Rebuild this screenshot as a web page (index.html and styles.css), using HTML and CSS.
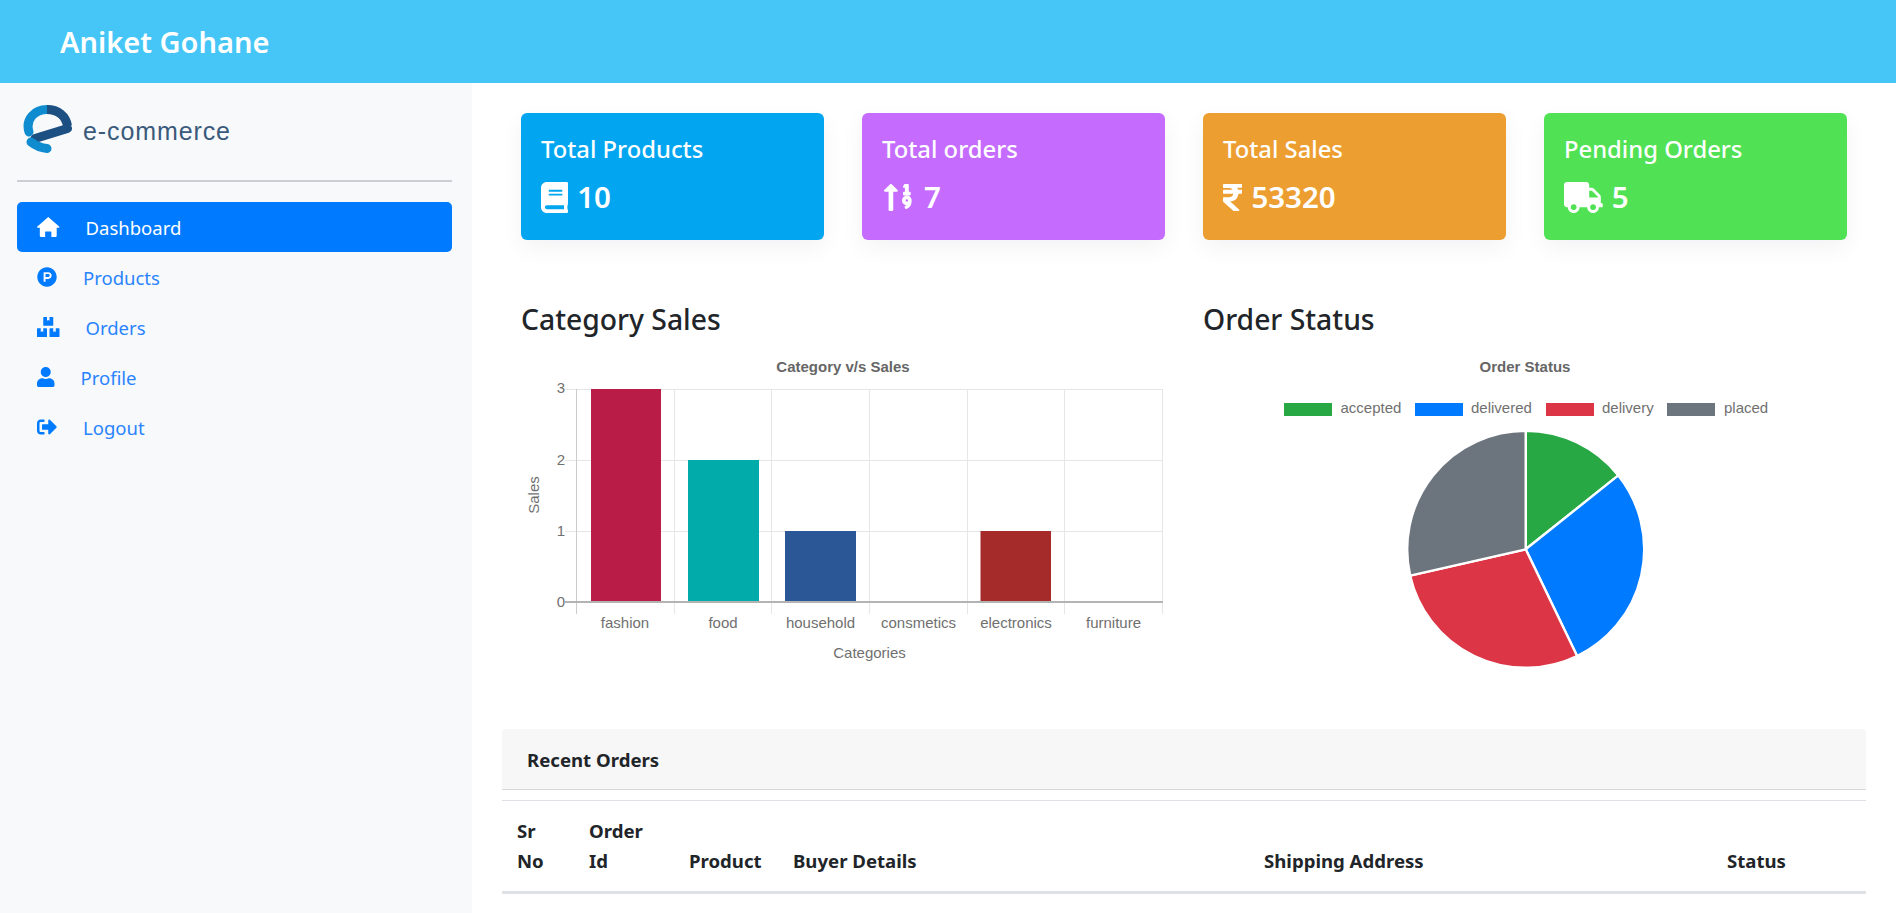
FILE: index.html
```html
<!DOCTYPE html>
<html lang="en">
<head>
    <meta charset="UTF-8">
    <meta name="viewport" content="width=device-width, initial-scale=1.0">
    <title>Admin Dashboard</title>
    <link rel="stylesheet" href="styles.css">
</head>
<body>
    <header class="topbar">
        <h1 class="brand-name">Aniket Gohane</h1>
    </header>

    <div class="layout">
        <aside class="sidebar">
            <div class="logo">
                <svg class="logo-mark" viewBox="0 0 50 50">
                    <path class="logo-blue" d="M7 27C3 14 13 4.500 25 4.500"/>
                    <path class="logo-dark" d="M25 4.500C36 4.500 44 11 45.500 21"/>
                    <path class="logo-bar" d="M45.500 23.500L13 33.500"/>
                    <path class="logo-tail" d="M9 37C14 41 20 43 25 43.500"/>
                </svg>
                <span class="logo-text">e-commerce</span>
            </div>
            <hr class="divider">
            <nav class="nav">
                <a class="nav-link active" href="#">
                    <svg class="nav-icon" viewBox="0 0 576 512"><path d="M288 0L566 240a20 20 0 0 1-14 36H504V480a32 32 0 0 1-32 32H368V384a16 16 0 0 0-16-16H224a16 16 0 0 0-16 16V512H104a32 32 0 0 1-32-32V276H24a20 20 0 0 1-14-36Z"/></svg>
                    Dashboard
                </a>
                <a class="nav-link" href="#">
                    <svg class="nav-icon" viewBox="0 0 512 512"><path d="M326.300 218.800c0 20.500-16.700 37.200-37.200 37.200h-70.300v-74.400h70.300c20.500 0 37.200 16.700 37.200 37.200zM504 256c0 137-111 248-248 248S8 393 8 256 119 8 256 8s248 111 248 248zm-128.100-37.200c0-47.900-38.900-86.800-86.800-86.800H169.200v248h49.600v-74.400h70.300c47.900 0 86.800-38.900 86.800-86.800z"/></svg>
                    Products
                </a>
                <a class="nav-link" href="#">
                    <svg class="nav-icon" viewBox="0 0 576 512"><path d="M560 288h-80v96l-32-21.300-32 21.300v-96h-80c-8.800 0-16 7.200-16 16v192c0 8.800 7.200 16 16 16h224c8.800 0 16-7.200 16-16V304c0-8.800-7.200-16-16-16zm-384-64h224c8.800 0 16-7.200 16-16V16c0-8.800-7.200-16-16-16h-80v96l-32-21.300L256 96V0h-80c-8.800 0-16 7.200-16 16v192c0 8.800 7.200 16 16 16zm64 64h-80v96l-32-21.300L96 384v-96H16c-8.800 0-16 7.200-16 16v192c0 8.800 7.200 16 16 16h224c8.800 0 16-7.200 16-16V304c0-8.800-7.200-16-16-16z"/></svg>
                    Orders
                </a>
                <a class="nav-link" href="#">
                    <svg class="nav-icon" viewBox="0 0 448 512"><path d="M224 256c70.700 0 128-57.300 128-128S294.700 0 224 0 96 57.300 96 128s57.300 128 128 128zm89.600 32h-16.700c-22.200 10.200-46.900 16-72.900 16s-50.600-5.800-72.900-16h-16.700C60.200 288 0 348.200 0 422.400V464c0 26.500 21.500 48 48 48h352c26.500 0 48-21.500 48-48v-41.600c0-74.200-60.200-134.400-134.400-134.400z"/></svg>
                    Profile
                </a>
                <a class="nav-link" href="#">
                    <svg class="nav-icon" viewBox="0 0 512 512"><path d="M497 273L329 441c-15 15-41 4.500-41-17v-96H152c-13.300 0-24-10.700-24-24v-96c0-13.300 10.700-24 24-24h136V88c0-21.400 25.900-32 41-17l168 168c9.300 9.400 9.300 24.600 0 34zM192 436v-40c0-6.600-5.400-12-12-12H96c-17.700 0-32-14.300-32-32V160c0-17.700 14.300-32 32-32h84c6.600 0 12-5.400 12-12V76c0-6.600-5.400-12-12-12H96c-53 0-96 43-96 96v192c0 53 43 96 96 96h84c6.600 0 12-5.400 12-12z"/></svg>
                    Logout
                </a>
            </nav>
        </aside>

        <main class="content">
            <section class="stats">
                <div class="stat-card stat-blue">
                    <h3 class="stat-title">Total Products</h3>
                    <p class="stat-value">
                        <svg class="stat-icon" viewBox="0 0 448 512"><path d="M448 360V24c0-13.300-10.700-24-24-24H96C43 0 0 43 0 96v320c0 53 43 96 96 96h328c13.300 0 24-10.700 24-24v-16c0-7.500-3.500-14.300-8.900-18.700-4.200-15.400-4.200-59.300 0-74.700 5.400-4.300 8.900-11.100 8.900-18.600zM128 134c0-3.300 2.700-6 6-6h212c3.300 0 6 2.700 6 6v20c0 3.300-2.700 6-6 6H134c-3.300 0-6-2.700-6-6v-20zm0 64c0-3.300 2.700-6 6-6h212c3.300 0 6 2.700 6 6v20c0 3.300-2.700 6-6 6H134c-3.300 0-6-2.700-6-6v-20zm253.400 250H96c-17.700 0-32-14.300-32-32 0-17.600 14.400-32 32-32h285.400c-1.900 17.100-1.900 46.900 0 64z"/></svg>
                        10
                    </p>
                </div>
                <div class="stat-card stat-purple">
                    <h3 class="stat-title">Total orders</h3>
                    <p class="stat-value">
                        <svg class="stat-icon" viewBox="-32 0 544 512">
                            <path transform="scale(1.2 1)" d="M107.310 36.690a16 16 0 0 0-22.620 0l-80 96C-5.350 142.740 1.780 160 16 160h48v304a16 16 0 0 0 16 16h32a16 16 0 0 0 16-16V160h48c14.210 0 21.380-17.240 11.310-27.310z"/>
                            <path transform="translate(26 -256)" d="M400 416h-16V304a16 16 0 0 0-16-16h-48a16 16 0 0 0-14.290 8.830l-16 32A16 16 0 0 0 304 352h16v64h-16a16 16 0 0 0-16 16v32a16 16 0 0 0 16 16h96a16 16 0 0 0 16-16v-32a16 16 0 0 0-16-16z"/>
                            <path transform="translate(26 256)" d="M330.170 -29.090a79 79 0 0 0-55 54.170c-14.270 51.050 21.190 97.770 68.830 102.530a84.070 84.070 0 0 1-20.850 12.910c-7.570 3.400-10.800 12.470-8.180 20.340l9.900 20c2.870 8.630 12.530 13.490 20.900 9.910 58-24.770 86.250-61.610 86.250-132V48c-.02-51.210-48.400-91.340-101.850-77.090zM352 68a20 20 0 1 1 20-20 20 20 0 0 1-20 20z"/>
                        </svg>
                        7
                    </p>
                </div>
                <div class="stat-card stat-orange">
                    <h3 class="stat-title">Total Sales</h3>
                    <p class="stat-value">
                        <svg class="stat-icon" viewBox="0 0 320 512"><path d="M308 96c6.627 0 12-5.373 12-12V44c0-6.627-5.373-12-12-12H12C5.373 32 0 37.373 0 44v44.748c0 6.627 5.373 12 12 12h85.280c27.308 0 48.261 9.958 60.970 27.252H12c-6.627 0-12 5.373-12 12v40c0 6.627 5.373 12 12 12h158.757c-6.217 36.086-32.961 58.632-74.757 58.632H12c-6.627 0-12 5.373-12 12v53.012c0 3.349 1.400 6.546 3.861 8.818l165.052 152.356a12.001 12.001 0 0 0 8.139 3.182h82.562c10.924 0 16.166-13.408 8.139-20.818L116.871 319.906c76.499-2.340 131.144-53.395 138.318-127.906H308c6.627 0 12-5.373 12-12v-40c0-6.627-5.373-12-12-12h-58.690c-3.486-11.541-8.280-22.246-14.252-32H308z"/></svg>
                        53320
                    </p>
                </div>
                <div class="stat-card stat-green">
                    <h3 class="stat-title">Pending Orders</h3>
                    <p class="stat-value">
                        <svg class="stat-icon" viewBox="0 0 640 512"><path d="M624 352h-16V243.900c0-12.700-5.100-24.900-14.100-33.900L494 110.100c-9-9-21.200-14.100-33.900-14.100H416V48c0-26.500-21.500-48-48-48H48C21.500 0 0 21.500 0 48v320c0 26.500 21.500 48 48 48h16c0 53 43 96 96 96s96-43 96-96h128c0 53 43 96 96 96s96-43 96-96h48c8.800 0 16-7.200 16-16v-32c0-8.800-7.200-16-16-16zM160 464c-26.500 0-48-21.500-48-48s21.500-48 48-48 48 21.500 48 48-21.500 48-48 48zm320 0c-26.500 0-48-21.500-48-48s21.500-48 48-48 48 21.500 48 48-21.500 48-48 48zm80-208H416V144h44.100l99.900 99.900V256z"/></svg>
                        5
                    </p>
                </div>
            </section>

            <section class="charts">
                <div class="chart-box">
                    <h2 class="chart-heading">Category Sales</h2>
                    <svg class="chart" width="660" height="330" viewBox="0 0 660 330">
                        <text class="chart-title" x="322" y="22" text-anchor="middle">Category v/s Sales</text>
                        <g class="grid">
                            <line x1="44" y1="39.500" x2="642" y2="39.500"/>
                            <line x1="44" y1="110.500" x2="642" y2="110.500"/>
                            <line x1="44" y1="181.500" x2="642" y2="181.500"/>
                            <line x1="153.500" y1="39" x2="153.500" y2="264"/>
                            <line x1="250.500" y1="39" x2="250.500" y2="264"/>
                            <line x1="348.500" y1="39" x2="348.500" y2="264"/>
                            <line x1="446.500" y1="39" x2="446.500" y2="264"/>
                            <line x1="543.500" y1="39" x2="543.500" y2="264"/>
                            <line x1="641.500" y1="39" x2="641.500" y2="264"/>
                        </g>
                        <rect class="bar-fashion" x="70" y="39" width="70" height="213"/>
                        <rect class="bar-food" x="167" y="110" width="71" height="142"/>
                        <rect class="bar-household" x="264" y="181" width="71" height="71"/>
                        <rect class="bar-electronics" x="459.500" y="181" width="70.500" height="71"/>
                        <line class="axis-y" x1="55.500" y1="39" x2="55.500" y2="264"/>
                        <line class="axis-x" x1="44" y1="252" x2="642" y2="252"/>
                        <g class="tick" text-anchor="end">
                            <text x="44" y="43">3</text>
                            <text x="44" y="115">2</text>
                            <text x="44" y="186">1</text>
                            <text x="44" y="257">0</text>
                        </g>
                        <g class="tick" text-anchor="middle">
                            <text x="104" y="278">fashion</text>
                            <text x="202" y="278">food</text>
                            <text x="299.500" y="278">household</text>
                            <text x="397.500" y="278">consmetics</text>
                            <text x="495" y="278">electronics</text>
                            <text x="592.500" y="278">furniture</text>
                            <text x="348.500" y="308">Categories</text>
                            <text transform="translate(18 145) rotate(-90)">Sales</text>
                        </g>
                    </svg>
                </div>
                <div class="chart-box">
                    <h2 class="chart-heading">Order Status</h2>
                    <svg class="chart" width="640" height="330" viewBox="0 0 640 330">
                        <text class="chart-title" x="322" y="22" text-anchor="middle">Order Status</text>
                        <rect class="slice-accepted" x="81" y="53" width="48" height="13"/>
                        <rect class="slice-delivered" x="212" y="53" width="48" height="13"/>
                        <rect class="slice-delivery" x="343" y="53" width="48" height="13"/>
                        <rect class="slice-placed" x="464" y="53" width="48" height="13"/>
                        <g class="tick">
                            <text x="137.500" y="63">accepted</text>
                            <text x="268" y="63">delivered</text>
                            <text x="399" y="63">delivery</text>
                            <text x="521" y="63">placed</text>
                        </g>
                        <g class="pie">
                            <path class="slice-accepted" d="M322.700 199.300L322.700 80.800A118.500 118.500 0 0 1 415.340 125.420Z"/>
                            <path class="slice-delivered" d="M322.700 199.300L415.340 125.420A118.500 118.500 0 0 1 374.120 306.070Z"/>
                            <path class="slice-delivery" d="M322.700 199.300L374.120 306.070A118.500 118.500 0 0 1 207.170 225.670Z"/>
                            <path class="slice-placed" d="M322.700 199.300L207.170 225.670A118.500 118.500 0 0 1 322.700 80.800Z"/>
                        </g>
                    </svg>
                </div>
            </section>

            <section class="orders">
                <div class="orders-header">Recent Orders</div>
                <table class="orders-table">
                    <thead>
                        <tr>
                            <th class="col-sr">Sr No</th>
                            <th class="col-id">Order Id</th>
                            <th class="col-product">Product</th>
                            <th class="col-buyer">Buyer Details</th>
                            <th class="col-address">Shipping Address</th>
                            <th>Status</th>
                        </tr>
                    </thead>
                </table>
            </section>
        </main>
    </div>
</body>
</html>
```

FILE: styles.css
```css
* {
    box-sizing: border-box;
}

html,
body {
    height: 100%;
}

body {
    margin: 0;
    overflow: hidden;
    font-family: "Noto Sans", "Open Sans", Arial, sans-serif;
    color: #212529;
    background: #fff;
}

.topbar {
    height: 83px;
    padding-left: 60px;
    display: flex;
    align-items: center;
    background: #45c6f7;
}

.brand-name {
    margin: 0;
    font-size: 29px;
    font-weight: 600;
    color: #fff;
}

.layout {
    display: grid;
    grid-template-columns: 472px 1fr;
    height: calc(100vh - 83px);
}

.sidebar {
    padding: 22px 20px 0 17px;
    background: #f8f9fa;
}

.logo {
    height: 50px;
    padding-left: 5px;
    display: flex;
    align-items: center;
    gap: 11px;
}

.logo-mark {
    width: 50px;
    height: 50px;
    fill: none;
}

.logo-blue,
.logo-dark {
    stroke-width: 9;
}

.logo-blue {
    stroke: #0f8ccf;
    stroke-linecap: round;
}

.logo-dark {
    stroke: #1c4f82;
}

.logo-bar {
    stroke: #1c4f82;
    stroke-width: 9;
    stroke-linecap: round;
}

.logo-tail {
    stroke: #0f8ccf;
    stroke-width: 9;
    stroke-linecap: round;
}

.logo-text {
    padding-top: 2px;
    font-family: "Liberation Sans", Arial, sans-serif;
    font-size: 25px;
    letter-spacing: 0.9px;
    color: #3a5a7c;
}

.divider {
    margin: 25px 0 20px;
    border: 0;
    border-top: 2px solid #ccced1;
}

.nav {
    display: flex;
    flex-direction: column;
}

.nav-link {
    height: 50px;
    padding-left: 20px;
    display: flex;
    align-items: center;
    gap: 26px;
    border-radius: 5px;
    font-size: 18.500px;
    color: #2a84ff;
    text-decoration: none;
}

.nav-link.active {
    background: #007bff;
    color: #fff;
}

.nav-icon {
    height: 20px;
    width: auto;
    fill: #007bff;
}

.nav-link.active .nav-icon {
    fill: #fff;
}

.content {
    padding: 30px 30px 0;
}

.stats {
    padding: 0 19px;
    display: grid;
    grid-template-columns: repeat(4, 303px);
    justify-content: space-between;
}

.stat-card {
    height: 127px;
    padding: 19px 20px 0;
    border-radius: 6px;
    box-shadow: 0 8px 24px rgba(0, 0, 50, 0.05);
    color: #fff;
}

.stat-blue {
    background: #02a5ef;
}

.stat-purple {
    background: #c56cff;
}

.stat-orange {
    background: #ed9e31;
}

.stat-green {
    background: #50e254;
}

.stat-title {
    margin: 0;
    font-size: 23.800px;
    font-weight: 500;
    line-height: 34px;
}

.stat-value {
    margin: 13px 0 0;
    display: flex;
    align-items: center;
    gap: 9px;
    font-size: 29.500px;
    font-weight: 600;
    line-height: 36px;
}

.stat-icon {
    height: 31px;
    width: auto;
    fill: #fff;
}

.charts {
    margin-top: 58px;
    padding-left: 19px;
    display: grid;
    grid-template-columns: 682px 1fr;
}

.chart-heading {
    margin: 0;
    font-size: 28.300px;
    font-weight: 500;
    line-height: 42px;
    color: #212529;
}

.chart {
    display: block;
    margin-top: 10px;
}

.chart-title {
    font-family: "Liberation Sans", Arial, sans-serif;
    font-size: 15px;
    font-weight: 700;
    fill: #666;
}

.tick {
    font-family: "Liberation Sans", Arial, sans-serif;
    font-size: 15px;
    fill: #707070;
}

.grid line {
    stroke: #e6e6e6;
}

.axis-y {
    stroke: #ccc;
}

.axis-x {
    stroke: #b3b3b3;
    stroke-width: 2;
}

.bar-fashion {
    fill: #b91d47;
}

.bar-food {
    fill: #00aba9;
}

.bar-household {
    fill: #2b5797;
}

.bar-electronics {
    fill: #a52a2a;
}

.slice-accepted {
    fill: #28a745;
}

.slice-delivered {
    fill: #007bff;
}

.slice-delivery {
    fill: #dc3545;
}

.slice-placed {
    fill: #6c757d;
}

.pie path {
    stroke: #fff;
    stroke-width: 2.400;
}

.orders {
    margin-top: 49px;
}

.orders-header {
    height: 61px;
    padding-left: 25px;
    display: flex;
    align-items: center;
    border-radius: 4px 4px 0 0;
    border-bottom: 1px solid #d9d9d9;
    background: #f7f7f7;
    font-size: 18.600px;
    font-weight: 700;
}

.orders-table {
    width: 100%;
    margin-top: 10px;
    border-collapse: collapse;
    table-layout: fixed;
}

.orders-table th {
    padding: 15px 15px 15px;
    border-top: 1px solid #dee2e6;
    border-bottom: 3px solid #dee2e6;
    vertical-align: bottom;
    text-align: left;
    font-size: 18.600px;
    font-weight: 700;
    line-height: 30px;
}

.col-sr {
    width: 72px;
}

.col-id {
    width: 100px;
}

.col-product {
    width: 104px;
}

.col-buyer {
    width: 471px;
}

.col-address {
    width: 463px;
}
```
